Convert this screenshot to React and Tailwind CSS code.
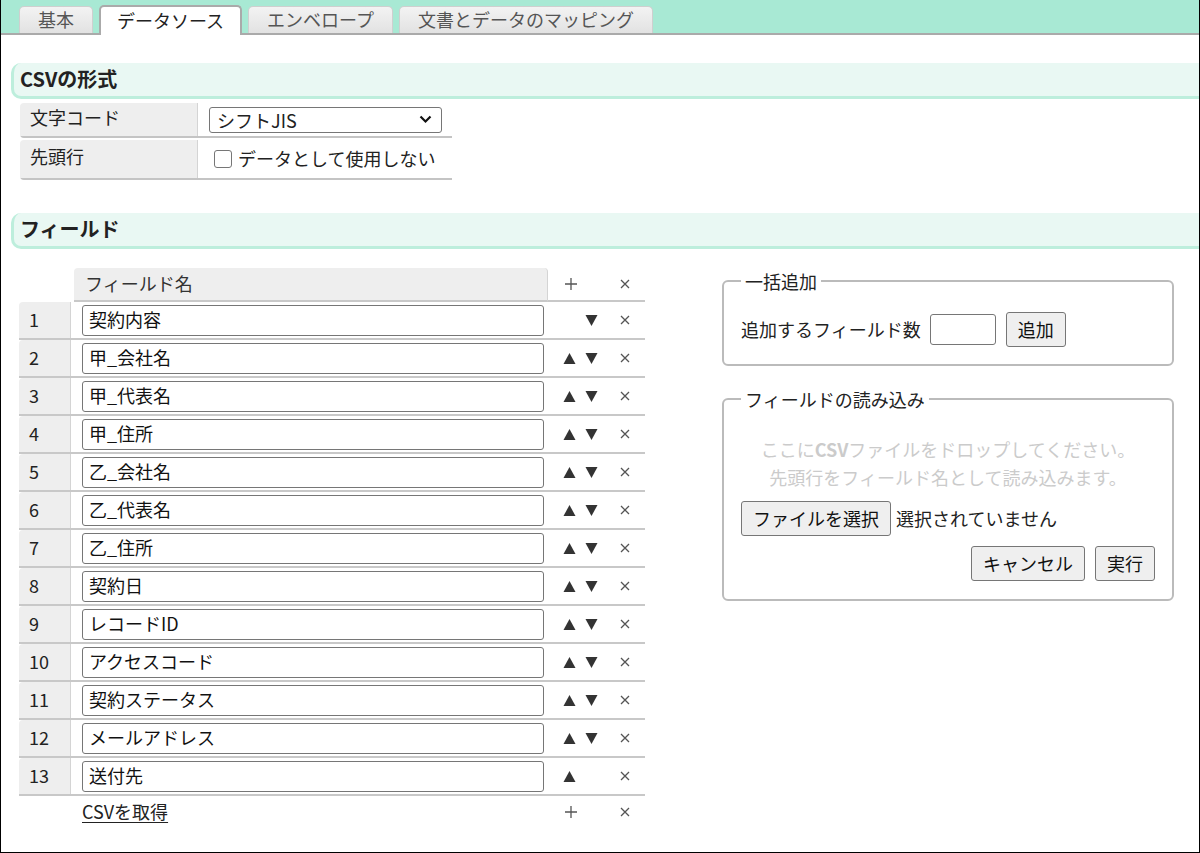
import React from 'react';

const FONT = { fontFamily: '"Noto Sans CJK JP", "Noto Sans", sans-serif' };

const fields = ['契約内容','甲_会社名','甲_代表名','甲_住所','乙_会社名','乙_代表名','乙_住所','契約日','レコードID','アクセスコード','契約ステータス','メールアドレス','送付先'];

function Up() {
  return (
    <svg width="13" height="13" viewBox="0 0 13 13"><polygon points="6.5,1 12.5,12 0.5,12" fill="#333" /></svg>
  );
}
function Down() {
  return (
    <svg width="13" height="13" viewBox="0 0 13 13"><polygon points="0.5,1 12.5,1 6.5,12" fill="#333" /></svg>
  );
}
function Cross() {
  return (
    <svg width="10" height="10" viewBox="0 0 10 10"><path d="M1 1L9 9M9 1L1 9" stroke="#555" strokeWidth="1.3" /></svg>
  );
}
function Plus() {
  return (
    <svg width="12" height="12" viewBox="0 0 12 12"><path d="M6 0V12M0 6H12" stroke="#555" strokeWidth="1.3" /></svg>
  );
}

function SectionHeader({ children }) {
  return (
    <div className="ml-[10px] h-[36px] bg-[#e9f8f3] border-l-[3px] border-b-[3px] border-[#bdeedc] rounded-l-[10px] flex items-center pl-[6px] pb-[2px]">
      <span className="text-[20px] font-bold text-[#222] leading-none">{children}</span>
    </div>
  );
}

function Tab({ children, active }) {
  if (active) {
    return (
      <div className="h-[30px] -mb-[2px] px-[16px] pb-[2px] bg-white border-2 border-b-0 border-[#aaa] rounded-t-[5px] flex items-center text-[#222] text-[18px] leading-none">
        {children}
      </div>
    );
  }
  return (
    <div className="h-[27px] mb-0 px-[18px] pb-[2px] bg-gradient-to-b from-[#f3f3f3] to-[#e2e2e2] border border-b-0 border-[#cfcfcf] rounded-t-[5px] flex items-center text-[#555] text-[18px] leading-none">
      {children}
    </div>
  );
}

function Btn({ children, w }) {
  return (
    <div className={`h-[35px] ${w} bg-[#efefef] border border-[#767676] rounded-[3px] flex items-center justify-center pb-[2px] text-[18px] text-[#111] leading-none`}>
      {children}
    </div>
  );
}

export default function App() {
  return (
    <div style={FONT} className="w-[1200px] h-[853px] bg-white border-l border-r border-b border-black overflow-hidden text-[#222]">
      {/* Tab bar */}
      <div className="h-[35px] bg-[#a8e9d4] border-b-2 border-[#aaa] flex items-end pl-[18px] gap-[6px]">
        <Tab>基本</Tab>
        <Tab active>データソース</Tab>
        <Tab>エンベロープ</Tab>
        <Tab>文書とデータのマッピング</Tab>
      </div>

      <div className="mt-[28px]">
        <SectionHeader>CSVの形式</SectionHeader>
      </div>

      {/* CSV format table */}
      <div className="ml-[19px] mt-[4px] w-[432px] text-[18px]">
        <div className="flex h-[35px] border-b-2 border-[#c4c4c4] rounded-bl-[4px]">
          <div className="w-[178px] bg-[#eee] border-r border-[#d4d4d4] rounded-tl-[4px] pl-[10px] flex items-center pb-[6px] leading-none">文字コード</div>
          <div className="flex-1 pl-[11px] pt-[4px]">
            <div className="w-[233px] h-[26px] border border-[#767676] rounded-[3px] flex items-center justify-between pl-[7px] pr-[9px] pb-[1px] leading-none">
              <span>シフトJIS</span>
              <svg width="13" height="9" viewBox="0 0 13 9"><path d="M1.5 1.5L6.5 6.5L11.5 1.5" stroke="#111" strokeWidth="2.2" fill="none" /></svg>
            </div>
          </div>
        </div>
        <div className="flex h-[40px] border-b-2 border-[#c4c4c4] mt-[2px] rounded-bl-[4px]">
          <div className="w-[178px] bg-[#eee] border-r border-[#d4d4d4] rounded-tl-[4px] pl-[10px] flex items-center pb-[6px] leading-none">先頭行</div>
          <div className="flex-1 pl-[16px] flex items-center">
            <span className="w-[18px] h-[18px] border border-[#767676] rounded-[3px] mr-[6px]"></span>
            <span className="leading-none pb-[2px]">データとして使用しない</span>
          </div>
        </div>
      </div>

      <div className="mt-[33px]">
        <SectionHeader>フィールド</SectionHeader>
      </div>

      <div className="flex mt-[19px] text-[18px]">
        {/* Field table */}
        <div className="ml-[18px] w-[626px]">
          <div className="flex h-[34px]">
            <div className="w-[55px]"></div>
            <div className="w-[474px] bg-[#eee] border-r border-[#d4d4d4] rounded-t-[4px] border-b-2 border-b-[#c8c8c8] flex items-center pl-[11px] pb-[3px] leading-none text-[#333]">フィールド名</div>
            <div className="w-[58px] border-b-2 border-[#c8c8c8] flex items-center justify-center pr-[12px]"><Plus /></div>
            <div className="w-[39px] border-b-2 border-[#c8c8c8] flex items-center justify-center pr-[2px]"><Cross /></div>
          </div>
          {fields.map((f, i) => (
            <div key={i} className="flex h-[38px] border-b-2 border-[#c8c8c8]">
              <div className="w-[52px] bg-[#eee] border-r border-[#d4d4d4] rounded-tl-[4px] flex items-center pl-[10px] pb-[2px] leading-none">{i + 1}</div>
              <div className="pl-[11px] flex items-center">
                <div className="w-[462px] h-[31px] border border-[#767676] rounded-[3px] flex items-center pl-[6px] pb-[3px] leading-none text-[#111]">{f}</div>
              </div>
              <div className="w-[62px] flex items-center pl-[14px]">
                <span className="w-[22px] flex justify-center">{i > 0 ? <Up /> : null}</span>
                <span className="w-[22px] flex justify-center">{i < fields.length - 1 ? <Down /> : null}</span>
              </div>
              <div className="w-[39px] flex items-center justify-center pr-[2px]"><Cross /></div>
            </div>
          ))}
          <div className="flex h-[32px] items-center">
            <div className="w-[63px]"></div>
            <div className="w-[466px] leading-none pb-[2px]"><span className="underline underline-offset-[3px] text-[#222]">CSVを取得</span></div>
            <div className="w-[58px] flex justify-center pr-[12px]"><Plus /></div>
            <div className="w-[39px] flex justify-center pr-[2px]"><Cross /></div>
          </div>
        </div>

        {/* Right column */}
        <div className="ml-[77px] w-[452px]">
          <fieldset className="border-2 border-[#bbb] rounded-[6px] px-[17px] pb-[17px]">
            <legend className="px-[4px] leading-[26px]">一括追加</legend>
            <div className="flex items-center pt-[18px]">
              <span className="leading-none pb-[2px]">追加するフィールド数</span>
              <div className="ml-[9px] w-[66px] h-[31px] border border-[#767676] rounded-[3px]"></div>
              <div className="ml-[10px]"><Btn w="w-[60px]">追加</Btn></div>
            </div>
          </fieldset>

          <fieldset className="mt-[20px] border-2 border-[#bbb] rounded-[6px] px-[17px] pb-[18px]">
            <legend className="px-[4px] leading-[26px]">フィールドの読み込み</legend>
            <div className="pt-[23px] text-center text-[#cbcbcb] leading-[28px]">
              <div>ここに<span className="font-bold">CSV</span>ファイルをドロップしてください。</div>
              <div>先頭行をフィールド名として読み込みます。</div>
            </div>
            <div className="mt-[10px] flex items-center">
              <Btn w="w-[150px]">ファイルを選択</Btn>
              <span className="ml-[5px] leading-none pb-[2px]">選択されていません</span>
            </div>
            <div className="mt-[10px] flex justify-end gap-[10px]">
              <Btn w="w-[114px]">キャンセル</Btn>
              <Btn w="w-[60px]">実行</Btn>
            </div>
          </fieldset>
        </div>
      </div>
    </div>
  );
}
